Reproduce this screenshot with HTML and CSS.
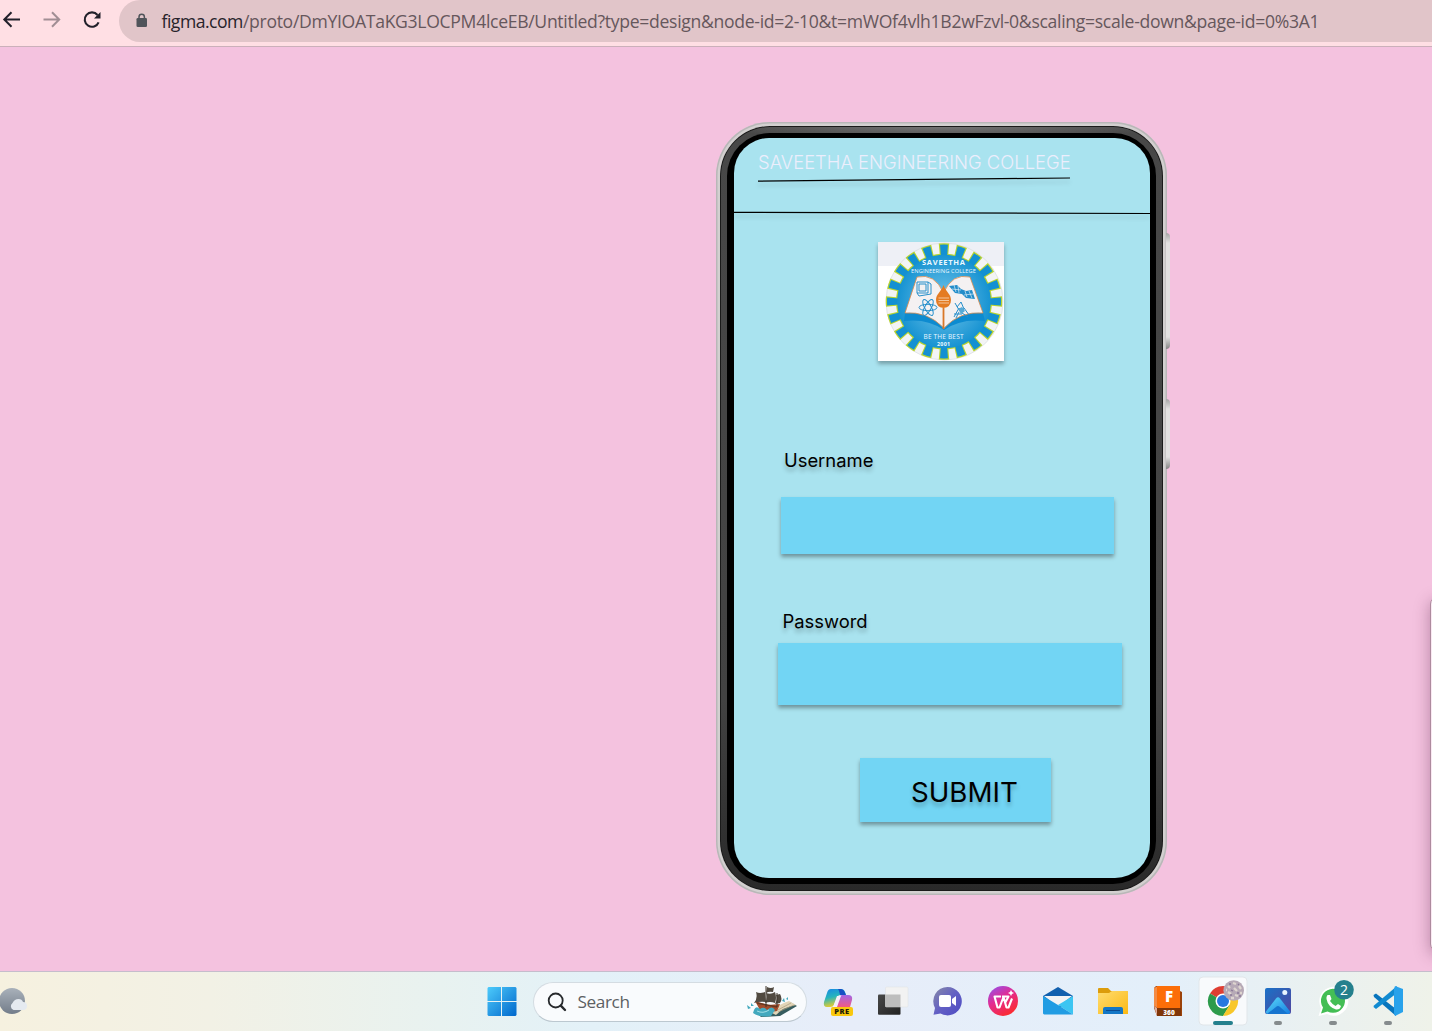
FILE: index.html
```html
<!DOCTYPE html>
<html lang="en">
<head>
<meta charset="utf-8">
<title>Untitled</title>
<link rel="stylesheet" href="styles.css">
</head>
<body>
<header class="toolbar">
  <svg class="nav" width="119" height="46" viewBox="0 0 119 46" fill="none" stroke-width="2">
    <path d="M20 19.5H5M11.500 12.300L4.300 19.500L11.500 26.700" stroke="#22202a"/>
    <path d="M43.500 19.500H59M52 12.300L59.200 19.500L52 26.700" stroke="#a18e94"/>
    <path d="M97.500 15A7.200 7.200 0 1 0 98.600 22.300" stroke="#22202a" stroke-width="2.100"/>
    <path d="M100.500 12V18.500H94Z" fill="#22202a"/>
  </svg>
  <div class="address">
    <svg width="12" height="15" viewBox="0 0 12 15"><rect x=".5" y="5" width="10.500" height="9" rx="1.300" fill="#50545a"/><path d="M3 6V4A2.700 2.700 0 0 1 8.400 4V6" fill="none" stroke="#50545a" stroke-width="1.500"/></svg>
    <span class="url"><b>figma.com</b>/proto/DmYIOATaKG3LOCPM4lceEB/Untitled?type=design&amp;node-id=2-10&amp;t=mWOf4vlh1B2wFzvl-0&amp;scaling=scale-down&amp;page-id=0%3A1</span>
  </div>
</header>

<main class="stage">
  <section class="phone">
    <i class="key volume"></i><i class="key power"></i>
    <div class="rim"><div class="bezel"><div class="screen">
      <h1 class="title">SAVEETHA ENGINEERING COLLEGE</h1>
      <svg class="rules" width="416" height="46" viewBox="0 0 416 46" stroke="#000" stroke-width="1.200"><path d="M24 10.200L336 7"/><path d="M0 41.300L416 42.500"/></svg>
      <svg class="logo" width="126" height="119" viewBox="0 0 126 119">
        <defs><radialGradient id="sky"><stop offset="0" stop-color="#75c6ea"/><stop offset="1" stop-color="#1793d2"/></radialGradient></defs>
        <rect width="126" height="119" fill="#fff"/><rect width="126" height="24" fill="#eef0f6"/>
        <circle cx="66.500" cy="59.500" r="58.500" fill="#f3f4f5" stroke="#d8dcdf" stroke-width=".7"/>
        <circle cx="66" cy="59.500" r="52" fill="none" stroke="#b9d42c" stroke-width="12.500" pathLength="240" stroke-dasharray="7 5" stroke-dashoffset="3.500"/>
        <circle cx="66" cy="59.500" r="48" fill="#b9d42c"/>
        <circle cx="66" cy="59.500" r="51" fill="none" stroke="#1390d2" stroke-width="12" pathLength="240" stroke-dasharray="5.400 6.600" stroke-dashoffset="2.700"/>
        <circle cx="66" cy="59.500" r="46.800" fill="url(#sky)"/>
        <path d="M27 71Q50 69 66 87Q82 69 105 71L107 79Q83 76 66 88Q49 76 26 79Z" fill="#0d8bd0"/>
        <path d="M39 35Q57 31 65.500 51Q74 31 92 35L105 71Q82 69 66 86Q49 69 27 71Z" fill="#f4f1f2" stroke="#d98a4d" stroke-width=".8"/>
        <path d="M65.500 66V87" stroke="#d97829" stroke-width="1.800"/>
        <path d="M65.500 43C68 50 73 52 73 58Q73 65 65.500 66Q58 65 58 58C58 52 63 50 65.500 43Z" fill="#e47b23"/>
        <path d="M60.500 56H71M60.500 58.500H71M60.500 61H71" stroke="#f6d9bd" stroke-width=".8"/>
        <g fill="none" stroke="#268fcb" stroke-width="1">
          <path d="M39 40H50V51H39ZM41 42H48V49H41ZM50 40L53 42V52L41 54L39 51"/>
          <ellipse cx="50" cy="65.500" rx="9" ry="3.200"/><ellipse cx="50" cy="65.500" rx="9" ry="3.200" transform="rotate(60 50 65.500)"/><ellipse cx="50" cy="65.500" rx="9" ry="3.200" transform="rotate(120 50 65.500)"/>
          <path d="M76 75L81 66L84 71L90 75M77 61L81 68M79 65L83 60L86 67L83 70M78 76L81 70M76 72H84M86 66L91 73"/>
        </g>
        <path d="M80 67L84 65L87 69L83 72Z" fill="#58aad6"/>
        <path d="M71 44L79 43L83 47L88 49L94 48L97 57L88 56L84 52L77 51Z" fill="#238dca"/>
        <path d="M76 43L78 50M80 44L81 51M87 49L89 55M91 49L94 56M74 47L83 48M86 53L95 52" stroke="#dceef7" stroke-width=".7"/>
        <g class="logo-text"><text x="65.500" y="23.300" font-weight="700" font-size="7.500" textLength="43">SAVEETHA</text><text x="65.500" y="31" font-size="5.700" textLength="65">ENGINEERING COLLEGE</text><text x="65.500" y="97" font-size="6.500" textLength="40">BE THE BEST</text><text x="65.500" y="103.500" font-weight="700" font-size="5.300" textLength="13">2001</text></g>
      </svg>
      <form class="login">
        <label class="user-label">Username</label><div class="field user-field"></div>
        <label class="pass-label">Password</label><div class="field pass-field"></div>
        <div class="submit">SUBMIT</div>
      </form>
    </div></div></div>
  </section>
  <aside class="drawer"></aside>
</main>

<footer class="taskbar">
  <svg class="weather" width="30" height="59" viewBox="0 0 30 59"><defs><linearGradient id="moon" x2="0" y2="1"><stop stop-color="#a9b1ba"/><stop offset="1" stop-color="#737d8a"/></linearGradient></defs><circle cx="12" cy="29" r="13" fill="url(#moon)"/><path d="M13.500 38A4 4 0 0 1 12.500 31Q14.500 27 18.500 27Q22 27 23 30A4 4 0 0 1 23 38Z" fill="#e5eaf0"/></svg>
  <svg class="start" width="30" height="30" viewBox="0 0 30 30"><defs><linearGradient id="win" x2="1" y2="1"><stop stop-color="#4dcbfb"/><stop offset="1" stop-color="#0067cc"/></linearGradient></defs><path d="M1.500 0H14V14.100H.5V1ZM15 0H28.500L29.500 1V14.100H15ZM.5 15.100H14V29H1.500L.5 28ZM15 15.100H29.500V28L28.500 29H15Z" fill="url(#win)"/></svg>
  <div class="search">
    <svg width="20" height="20" viewBox="0 0 20 20" fill="none" stroke="#272a2d" stroke-linecap="round"><circle cx="8.700" cy="8.500" r="7" stroke-width="1.800"/><path d="M13.800 13.700L18 18" stroke-width="2.400"/></svg>
    <span>Search</span>
    <svg class="ship" width="52" height="34" viewBox="0 0 52 34">
      <path d="M12 29L28 24L44 17L51 21L34 31L15 32Z" fill="#365c5e"/><path d="M24 27Q31 20 43 16L50 20Q37 22 30 30Z" fill="#e2d5b7"/><path d="M28 27L45 18M32 27L48 20" stroke="#a99b7c" stroke-width=".7"/>
      <path d="M9 16L22 20L34 19L31 26L15 27Z" fill="#a24d2c"/><path d="M11 18L31 22" stroke="#693820" stroke-width="1.500"/>
      <path d="M21 2Q25 4 28 2L27 7Q23 6 20 8ZM10 7Q14 9 19 7L20 17Q14 16 8 18Q12 13 10 7ZM20 8Q25 10 29 7Q31 13 29 18Q24 16 19 18Q22 13 20 8ZM30 10L34 9Q37 14 34 18L29 19Q32 14 30 10Z" fill="#514a41"/><path d="M20 1V22M31 8V22" stroke="#3f342a"/>
      <path d="M8 25Q10 20 14 24Q18 21 21 25Q26 20 29 25L25 31Q14 33 7 28ZM1 20L5 23L2 24ZM5 18L8 21L5 21ZM36 16L38 13L39 17ZM40 14L42 12L42 15Z" fill="#43a9be"/><path d="M11 26Q17 29 23 25" stroke="#a4e0e7" fill="none"/>
    </svg>
  </div>
  <nav class="apps">
    <svg viewBox="0 0 55 60"><defs><linearGradient id="cop1" x1="0" x2=".3" y2="1"><stop stop-color="#1686e6"/><stop offset=".5" stop-color="#25b4bd"/><stop offset="1" stop-color="#eacd2b"/></linearGradient><linearGradient id="cop2" x2="0" y2="1"><stop stop-color="#a265e6"/><stop offset="1" stop-color="#f15b83"/></linearGradient></defs><path d="M21 18H31Q34 18 35 21L36 24H30Q28 24 27 27L24 34Q23 36 20 36H17Q13 36 14 31L17 22Q18 18 21 18Z" fill="url(#cop1)"/><path d="M28 18H31Q34 18 36 24H30Q29 19 28 18Z" fill="#164fc4"/><path d="M32 24H38Q43 24 42 29L40 36H26L29 27Q30 24 32 24Z" fill="url(#cop2)"/><path d="M27 25H31L27 36H23Z" fill="#f6effa"/><rect x="21" y="36" width="22" height="9" rx="2" fill="#f9c80e"/><text x="32" y="43.400" class="pre">PRE</text></svg>
    <svg viewBox="0 0 55 60"><defs><linearGradient id="dark" x2="1" y2="1"><stop stop-color="#484848"/><stop offset="1" stop-color="#222"/></linearGradient></defs><rect x="13" y="23.500" width="22.500" height="20.300" rx="1" fill="url(#dark)"/><rect x="20.500" y="16" width="22.500" height="20" rx="1" fill="#f2f2f2" stroke="#dfe1e3" stroke-width=".5"/><path d="M20.500 23.500H35.500V36H20.500Z" fill="#bdbdbd"/></svg>
    <svg viewBox="0 0 55 60"><defs><linearGradient id="chat" x2="1" y2="1"><stop stop-color="#878aa7"/><stop offset=".5" stop-color="#6360c4"/><stop offset="1" stop-color="#4d4bc3"/></linearGradient></defs><path d="M27.500 16A14.200 14.200 0 1 1 20.500 42.500L13.500 43.800L15 37A14.200 14.200 0 0 1 27.500 16Z" fill="url(#chat)"/><rect x="19" y="24" width="12" height="12" rx="2" fill="#fff"/><path d="M32 28L36 25V35L32 32Z" fill="#fff"/></svg>
    <svg viewBox="0 0 55 60"><defs><linearGradient id="wps" x2=".6" y2="1"><stop stop-color="#8b55f5"/><stop offset=".5" stop-color="#e32b91"/><stop offset="1" stop-color="#fb2b32"/></linearGradient></defs><circle cx="28" cy="29.900" r="15" fill="url(#wps)"/><path d="M26 25.500H19.500L22.500 36.500H24.500L28.500 26L31.500 36.500H33.500L37 27.500M27 25.500H33.500L30 32" fill="none" stroke="#fff" stroke-width="2.100" stroke-linejoin="round"/><path d="M36 19L37 21L39 22L37 23L36 25L35 23L33 22L35 21Z" fill="#fff"/></svg>
    <svg viewBox="0 0 55 60"><path d="M13 25L28 16L43 25V36H13Z" fill="#1260ae"/><path d="M14 25H42L28 36Z" fill="#f2f3f5"/><path d="M43 25V43.500L28 34Z" fill="#3cc5f2"/><path d="M13 25L28 34L43 43.500H14L13 42.500Z" fill="#219ce3"/></svg>
    <svg viewBox="0 0 55 60"><defs><linearGradient id="folder" x2="1" y2="1"><stop stop-color="#ffdc70"/><stop offset="1" stop-color="#fbb914"/></linearGradient></defs><path d="M13 18Q13 17 14 17H23L26 20H42L43 21V29H13Z" fill="#dc9c0b"/><path d="M13 22H24L27 20H42Q43 20 43 21V43H13Z" fill="url(#folder)"/><path d="M18 43V38Q18 36 20 36H36Q38 36 38 38V43Z" fill="#1477c6"/><path d="M21 39.500H35" stroke="#0b4b91"/></svg>
    <svg viewBox="0 0 55 60"><path d="M14 17L16 15H40V20L42 21V45H17L14 37Z" fill="#9c430a"/><path d="M14 17L18 15V37L14 35Z" fill="#f38b45"/><path d="M17 15H40V37H17Z" fill="#fc6e08"/><path d="M17 37H41V45H17Z" fill="#803608"/><path d="M14 35L17 37V45L16 42Z" fill="#e0afa0"/><text x="29" y="30.500" class="fusion">F</text><text x="29" y="43.500" class="fusion-small">360</text></svg>
    <svg viewBox="0 0 55 60"><rect x="4" y="6" width="48" height="48" rx="4" fill="#f8fafc" stroke="#e1e6ea"/><path d="M28 30L15 22.400A15 15 0 0 1 41 22.400Z" fill="#df3e32"/><path d="M28 30L15 22.400A15 15 0 0 0 28 45L35 34Z" fill="#2d9b4b"/><path d="M28 22.500H41A15 15 0 0 1 28 45L34.600 34Z" fill="#f8c729"/><circle cx="28" cy="30" r="7.500" fill="#fff"/><circle cx="28" cy="30" r="6" fill="#2878df"/><circle cx="38.700" cy="19.500" r="10.300" fill="#b6a9b6"/><path d="M33 15L35 17M33 21L36 23M38 12L41 13M39 17L42 20M40 24L43 25M44 15L46 18M31 19H32M45 22L47 22M36 27L39 27" stroke="#ded5cf" stroke-width="2.300" fill="none"/><path d="M34 13H36M36 19L38 20M43 14L44 13M35 24H37M44 25H46M42 22H44" stroke="#8a7898" stroke-width="1.300"/><rect x="18" y="50" width="20" height="4" rx="2" fill="#25808d"/></svg>
    <svg viewBox="0 0 55 60"><defs><linearGradient id="photo" x2="1" y2="1"><stop stop-color="#1a71c7"/><stop offset="1" stop-color="#51459e"/></linearGradient><linearGradient id="hill" x2="1" y2="1"><stop stop-color="#5cdcf9"/><stop offset="1" stop-color="#157ce0"/></linearGradient></defs><rect x="15" y="17" width="26" height="26" rx="2" fill="url(#photo)"/><path d="M15.500 41L26 27.500Q28 25 30 27.500L40.500 41L39 43H17Z" fill="url(#hill)"/><path d="M17 43L26 36Q28 34 30 36L38 43Z" fill="#1674cf"/><circle cx="34.800" cy="21.500" r="2.500" fill="#e9f5ff"/><rect x="24" y="50" width="8" height="4" rx="2" fill="#858b8d"/></svg>
    <svg viewBox="0 0 55 60"><path d="M13.500 45L16 37A14.500 14.500 0 1 1 22 43Z" fill="#fff"/><path d="M16 42.500L18 36.500A12 12 0 1 1 22.500 40.500Z" fill="#44be55"/><path d="M22.500 24L25 24L26.500 28L25 30Q27 33 30.500 35L33 33L36 35Q35 39 31 38.500Q23 36 21.500 28Q21 26 22.500 24Z" fill="#fff"/><circle cx="39" cy="18.800" r="9.800" fill="#25808d"/><text x="39" y="24" class="count">2</text><rect x="24" y="50" width="8" height="4" rx="2" fill="#858b8d"/></svg>
    <svg viewBox="0 0 55 60"><path d="M13.500 24L16 22.500L36 38V45L14 26Z" fill="#0875bd"/><path d="M13.500 36L16 38L37 22V15L14 34.500Z" fill="#118bd1"/><path d="M35 15L43 18V41L35 45L34 42V18Z" fill="#28a2eb"/><rect x="24" y="50" width="8" height="4" rx="2" fill="#858b8d"/></svg>
  </nav>
</footer>
</body>
</html>
```
FILE: styles.css
```css
* { box-sizing: border-box; }
body { margin: 0; width: 1432px; height: 1031px; overflow: hidden; display: flex; flex-direction: column; background: #f4c2df; font-family: Inter, sans-serif; }
.toolbar { display: flex; flex: 0 0 47px; background: #ffdfe4; border-bottom: 1px solid #cbb0ba; }
.nav { flex: none; }
.address { flex: 1; height: 42px; display: flex; align-items: center; gap: 14px; padding: 0 0 1px 16.500px; border-radius: 21px 0 0 21px; background: #e1c5c9; }
.url { font: 17.6px/24px "Open Sans", sans-serif; letter-spacing: -.31px; color: #66575c; white-space: nowrap; }
.url b { font-weight: 400; letter-spacing: -.5px; color: #27232a; }
.stage { position: relative; flex: 1; padding: 75px 0 0 716px; overflow: hidden; }
.phone { position: relative; width: 451px; height: 773px; padding: 4px; border-radius: 54px; background: #d3d0d0; box-shadow: inset 0 0 0 1.5px #b9b7b8; }
.key { position: absolute; left: 450px; width: 4px; border-radius: 0 4px 4px 0; background: linear-gradient(#a5a5a5, #e3e1e1 10px, #e3e1e1 calc(100% - 12px), #858585); }
.volume { top: 111px; height: 116px; }
.power { top: 277px; height: 70px; }
.rim { height: 100%; padding: 7px; border-radius: 50px; background: radial-gradient(ellipse 225px 14px at 50% 0, #777, transparent), linear-gradient(#484848, #424242 75%, #292929); box-shadow: inset 0 0 0 1px #1a1a1a; }
.bezel { height: 100%; padding: 5px 6px 6px 7px; border-radius: 43px; background: #000; }
.screen { height: 740px; overflow: hidden; border-radius: 35px; background: #a9e3ef; display: flex; flex-direction: column; }
.title { flex: none; margin: 11px 0 0 24px; font-size: 18.4px; font-weight: 350; letter-spacing: .02px; line-height: 26px; height: 22px; white-space: nowrap; color: #eceefc; }
.rules { flex: none; filter: drop-shadow(0 4px 2px rgba(0,0,0,.16)); }
.logo { flex: none; margin: 25px 0 0 144px; box-shadow: 0 3px 4px rgba(0,0,0,.3); }
.logo-text text { fill: #edf9ff; text-anchor: middle; font-family: "Open Sans", sans-serif; }
.login { display: flex; flex-direction: column; align-items: flex-start; margin-top: 86px; font-size: 18.4px; font-weight: 370; line-height: 26px; }
.login label, .submit { text-shadow: 0 4px 4px rgba(0,0,0,.25); }
.user-label { margin-left: 50px; }
.pass-label { margin: 54px 0 0 48.500px; }
.field, .submit { background: #72d5f4; box-shadow: 0 3px 4px rgba(0,0,0,.35); }
.user-field { width: 333px; height: 57px; margin: 24px 0 0 47px; }
.pass-field { width: 344px; height: 62px; margin: 9px 0 0 44px; }
.submit { width: 191px; height: 64px; margin: 53px 0 0 126px; padding: 2px 0 0 51px; font-size: 27.7px; line-height: 64px; }
.drawer { position: absolute; left: 1430px; top: 550px; width: 20px; height: 354px; border: 1px solid #ad8b9e; border-radius: 7px; background: #fae8f2; box-shadow: 0 4px 16px rgba(70,20,55,.35); }
.taskbar { flex: 0 0 60px; display: flex; align-items: center; border-top: 1px solid #c5bdcc; background: linear-gradient(90deg, #f6f1df 0, #f2f1e5 210px, #e8f2f0 440px, #e3f1f8 590px, #e7edf9 850px, #e3effa 1160px, #eff2e9 1432px); }
.weather { flex: none; }
.start { flex: none; margin-left: 456.500px; }
.search { flex: none; display: flex; align-items: center; width: 274px; height: 40px; margin-left: 16px; padding-left: 13px; border: 1px solid #d4dce2; border-bottom-color: #bcc8d0; border-radius: 20px; background: #f9fbfd; }
.search span { margin-left: 11px; width: 168px; font: 17.2px/24px "Open Sans", sans-serif; letter-spacing: -.4px; color: #5c6063; }
.ship { flex: none; }
.apps { display: flex; margin: -1px 0 0 3.500px; height: 60px; }
.apps svg { flex: none; width: 55px; height: 60px; }
.apps text { text-anchor: middle; font-family: "Open Sans", sans-serif; }
.pre { font-size: 7.5px; font-weight: 800; letter-spacing: .5px; fill: #231d08; }
.fusion { font-size: 15px; font-weight: 800; fill: #fff; }
.fusion-small { font-size: 6.5px; font-weight: 800; fill: #fff; }
.count { font-size: 14px; fill: #fff; }
```
